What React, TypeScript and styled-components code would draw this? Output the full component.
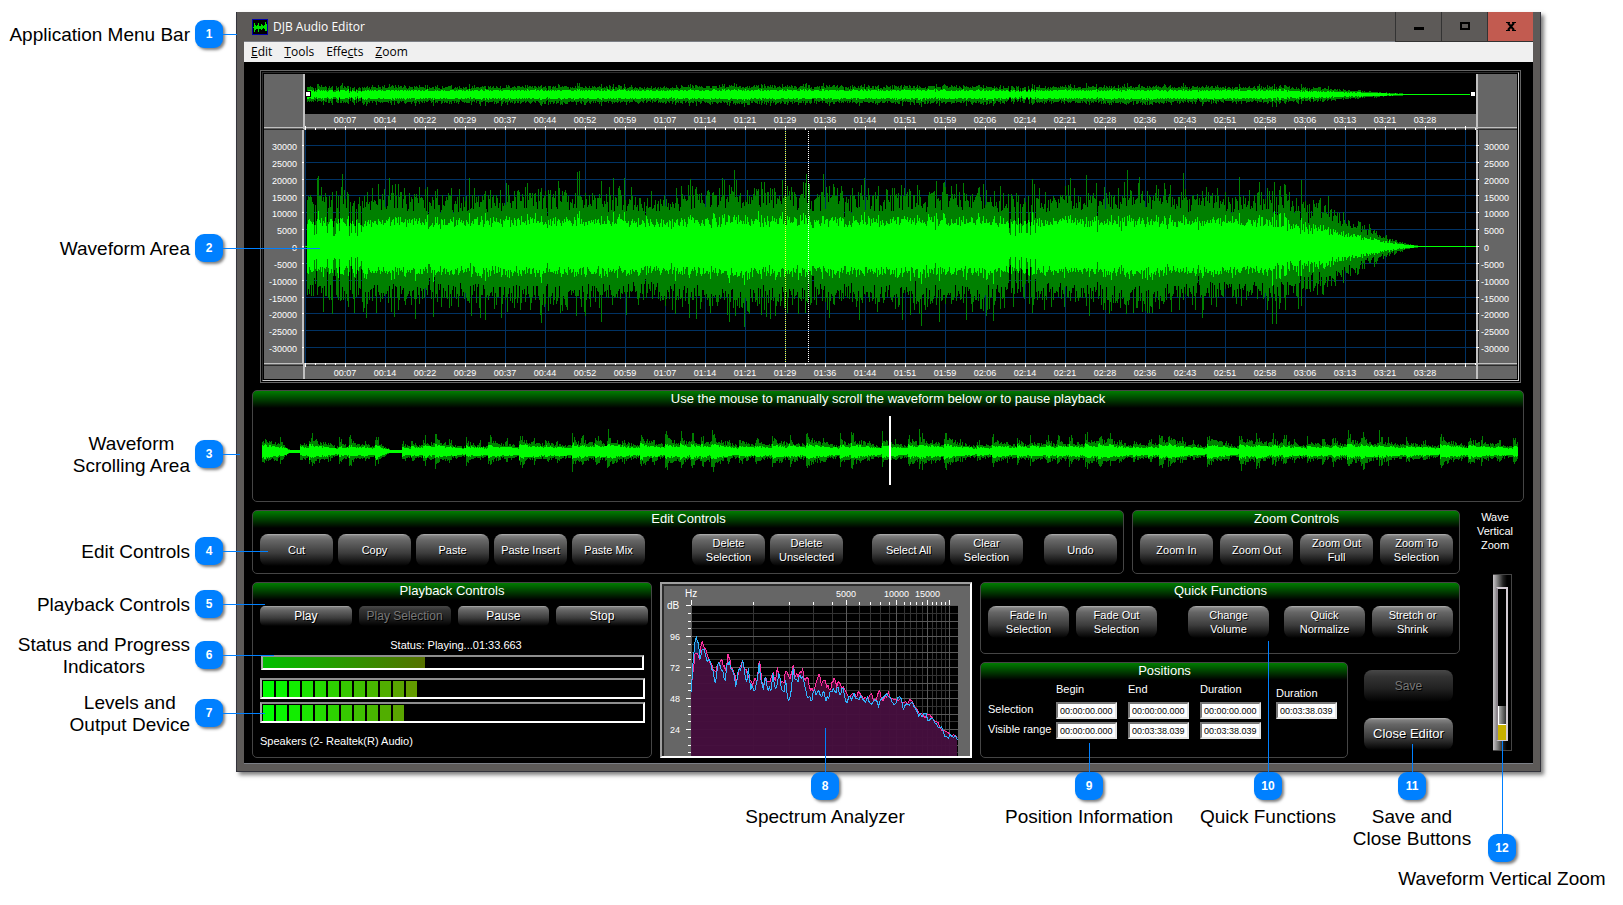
import React from "react";
import styled, { createGlobalStyle, css } from "styled-components";

const GlobalStyle = createGlobalStyle`
  * { box-sizing: border-box; }
  body { margin: 0; background: #fff; font-family: "Liberation Sans", Arial, sans-serif; color: #000; }
  button, input { font-family: inherit; }
`;

/* ---------- data ---------- */

const makeRandom = (seed: number) => () => {
  seed = (seed + 0x6d2b79f5) | 0;
  let t = Math.imul(seed ^ (seed >>> 15), 1 | seed);
  t = (t + Math.imul(t ^ (t >>> 7), 61 | t)) ^ t;
  return ((t ^ (t >>> 14)) >>> 0) / 4294967296;
};

type Sample = { up: number; down: number; innerUp: number; innerDown: number };

const TRACK_WIDTH = 1171;
const SCROLL_WIDTH = 1256;

const trackEnvelope = (x: number) => {
  if (x < 2) return 0;
  if (x > 1118) return 0;
  if (x > 1075) return 0.2 * Math.pow((1118 - x) / 43, 1.5);
  if (x > 965) return 0.2 + 0.8 * Math.pow((1075 - x) / 110, 0.9);
  return 1;
};

const trackSamples = (): Sample[] => {
  const random = makeRandom(11);
  const samples: Sample[] = [];
  for (let x = 0; x < TRACK_WIDTH; x++) {
    const env = trackEnvelope(x);
    const swell = 0.96 + 0.05 * Math.sin(x / 31) + (x > 400 && x < 560 ? 0.05 : 0);
    const sparse = x < 60 || (x > 694 && x < 742);
    const dip = random() < (sparse ? 0.2 : 0.02) ? (sparse ? 0.5 : 0.75) : 1;
    const burst = () => {
      const r = random();
      return 36 + random() * 20 + (r > 0.7 ? 9 : 0) + (r > 0.94 ? 12 : 0);
    };
    const fade = env < 1 ? 0.8 + random() * 0.5 : 1;
    const up = burst() * env * swell * dip * fade;
    const down = (burst() + 2) * env * swell * dip * fade;
    const peak = random() > 0.9 ? 4 : 0;
    samples.push({
      up,
      down,
      innerUp: (19 + random() * 8 + Math.max(0, up - 46) * 0.35 + peak) * env * dip * fade,
      innerDown: (19 + random() * 8 + Math.max(0, down - 48) * 0.35 + peak) * env * dip * fade,
    });
  }
  return samples;
};

const QUIET_SPANS = [[30, 37], [130, 139]];

const scrollSamples = (): Sample[] => {
  const random = makeRandom(29);
  const samples: Sample[] = [];
  let age = 0;
  let length = 18;
  let strength = 1;
  for (let x = 0; x < SCROLL_WIDTH; x++) {
    if (age >= length) {
      age = 0;
      length = 9 + Math.floor(random() * 10);
      strength = 0.55 + random() * 0.6;
    }
    const quiet = QUIET_SPANS.reduce(
      (level, [from, to]) => (x > to || x < from - 14 ? level : Math.max(0.06, (from - x) / 16)),
      1,
    );
    const level = quiet * strength * (0.4 + 0.6 * Math.exp(-age / (length * 0.9)));
    const spike = age < 4 && random() > 0.65 ? 6 : 0;
    const body = 11 * level;
    const up = body * (0.75 + random() * 0.6) + spike * level;
    const down = body * (0.75 + random() * 0.6) + spike * 0.7 * level;
    samples.push({ up, down, innerUp: body * (0.4 + random() * 0.25) + 0.5, innerDown: body * (0.4 + random() * 0.25) + 0.5 });
    age++;
  }
  return samples;
};

const columns = (samples: Sample[], middle: number, scale: number, inner: boolean) =>
  samples
    .map((s, x) => {
      const top = Math.round(middle - (inner ? s.innerUp : s.up) * scale);
      const bottom = Math.round(middle + 1 + (inner ? s.innerDown : s.down) * scale);
      return `M${x} ${top}h1V${bottom}h-1z`;
    })
    .join("");

const TRACK = trackSamples();
const SCROLL = scrollSamples();

const TIMES = [
  "00:07", "00:14", "00:22", "00:29", "00:37", "00:44", "00:52", "00:59", "01:07", "01:14",
  "01:21", "01:29", "01:36", "01:44", "01:51", "01:59", "02:06", "02:14", "02:21", "02:28",
  "02:36", "02:43", "02:51", "02:58", "03:06", "03:13", "03:21", "03:28",
];

const AMPLITUDES = [30000, 25000, 20000, 15000, 10000, 5000, 0, -5000, -10000, -15000, -20000, -25000, -30000];
const GRID_Y = [15, 32, 49, 65, 82, 99, 116, 133, 150, 167, 183, 200, 217];

/* ---------- page ---------- */

const Page = styled.main`
  display: grid;
  grid-template-columns: 236px minmax(0, 1fr) 82px;
  padding-top: 12px;
`;

const Margin = styled.div`
  display: flex;
  flex-direction: column;
  position: relative;
  z-index: 2;
`;

const SideCallout = styled.div<{ $before: number }>`
  display: flex;
  align-items: center;
  justify-content: flex-end;
  gap: 5px;
  height: 44px;
  margin-top: ${(p) => p.$before}px;
  padding-right: 13px;
`;

const CalloutLabel = styled.span`
  padding-top: 2px;
  font-size: 19px;
  line-height: 22px;
  text-align: center;
  white-space: pre;
`;

const Badge = styled.span`
  position: relative;
  flex: none;
  width: 28px;
  height: 28px;
  border-radius: 9px;
  background: #0080ff;
  color: #fff;
  font-size: 12px;
  font-weight: bold;
  line-height: 28px;
  text-align: center;
  box-shadow: 2px 2px 3px rgba(0, 0, 0, 0.5);
`;

const Leader = styled.i<{ $length: number; $up?: boolean }>`
  position: absolute;
  background: #0080ff;
  ${(p) =>
    p.$up
      ? css`
          left: 14px;
          bottom: 100%;
          width: 1px;
          height: ${p.$length}px;
        `
      : css`
          left: 100%;
          top: 14px;
          height: 1px;
          width: ${p.$length}px;
        `}
`;

const BottomCallouts = styled.div`
  grid-column: 1 / -1;
  display: grid;
  grid-template-columns:
    236px minmax(0, 480fr) minmax(0, 218fr) minmax(0, 65fr) minmax(0, 180fr) minmax(0, 178fr)
    minmax(0, 110fr) minmax(0, 70fr) 86px;
  position: relative;
  z-index: 2;
`;

const BottomCallout = styled.div<{ $column: number; $lower?: boolean }>`
  grid-column: ${(p) => p.$column};
  grid-row: 1;
  display: flex;
  flex-direction: column;
  align-items: center;
  gap: 4px;
  padding-top: ${(p) => (p.$lower ? 62 : 0)}px;
`;

/* ---------- window ---------- */

const Window = styled.section`
  background: #5d5a58;
  border: solid #33333b;
  border-width: 0 1px 1px;
  padding: 0 7px 7px;
  box-shadow: 3px 3px 4px rgba(0, 0, 0, 0.5);
`;

const TitleBar = styled.header`
  display: flex;
  align-items: center;
  height: 30px;
  padding-left: 8px;
  border-bottom: 1px solid #7c7f86;
`;

const WindowTitle = styled.h1`
  flex: 1;
  margin: 0 0 0 5px;
  font: 12px/16px "Open Sans", "Noto Sans", sans-serif;
  color: #fff;
`;

const WindowButton = styled.button<{ $close?: boolean }>`
  display: grid;
  place-items: center;
  width: 46px;
  height: 30px;
  padding: 0;
  border: solid #333;
  border-width: 0 0 1px 1px;
  background: ${(p) => (p.$close ? "#c25b50" : "transparent")};
`;

const MenuBar = styled.nav`
  display: flex;
  gap: 12px;
  height: 20px;
  padding-left: 7px;
  background: #f0f0f0;
`;

const MenuItem = styled.button`
  padding: 0;
  border: 0;
  background: none;
  color: #000;
  font: 12px/18px "Open Sans", "Noto Sans", sans-serif;
`;

const Client = styled.div`
  padding: 8px 9px 5px 8px;
  background: #000;
  color: #fff;
  border-bottom: 1px solid #7c7f86;
`;

/* ---------- waveform ---------- */

const WaveFrame = styled.div`
  margin: 0 3px 7px 8px;
  border: 1px solid #666;
  padding: 1px;
`;

const WaveBevel = styled.div`
  display: grid;
  grid-template-columns: 41px minmax(0, 1fr) 41px;
  border: 1px solid;
  border-color: #2b2b2b #c8c8c8 #c8c8c8 #2b2b2b;
  padding: 1px;
`;

const CornerCell = styled.div<{ $right?: boolean; $bottom?: boolean }>`
  background: #666;
  height: ${(p) => (p.$bottom ? 16 : 56)}px;
  border: solid;
  border-color: #c0c0c0 #c0c0c0 #2b2b2b;
  border-width: ${(p) => (p.$bottom ? "1px" : "0")} ${(p) => (p.$right ? 0 : 2)}px ${(p) => (p.$bottom ? 0 : 1)}px
    ${(p) => (p.$right ? 2 : 0)}px;
  box-shadow: ${(p) => (p.$bottom ? "inset 0 1px #666, inset 0 2px #2b2b2b" : "inset 0 -1px #666, inset 0 -2px #c0c0c0")};
`;

const Axis = styled.div<{ $right?: boolean }>`
  display: flex;
  flex-direction: ${(p) => (p.$right ? "row-reverse" : "row")};
  height: 233px;
  background: #666;
  color: #fff;
  font-size: 9px;
`;

const AxisLabels = styled.div<{ $right?: boolean }>`
  flex: 1;
  display: flex;
  flex-direction: column;
  padding: 9px ${(p) => (p.$right ? 0 : 5)}px 5px 0;
  text-align: ${(p) => (p.$right ? "left" : "right")};
`;

const AxisLabel = styled.span<{ $indent: number }>`
  flex: 1;
  display: block;
  line-height: 16px;
  padding-left: ${(p) => p.$indent}px;
`;

const AxisTicks = styled.svg`
  flex: none;
  width: 3px;
  height: 233px;
`;

const Overview = styled.svg`
  display: block;
  width: 100%;
  height: 40px;
  background: #000;
`;

const Plot = styled.svg`
  display: block;
  width: 100%;
  height: 233px;
  background: #000;
`;

const Ruler = styled.div<{ $bottom?: boolean }>`
  display: flex;
  flex-direction: ${(p) => (p.$bottom ? "column-reverse" : "column")};
  height: 16px;
  background: #666;
`;

const RulerLabels = styled.div`
  display: flex;
  height: 12px;
  padding: 0 31px 0 20px;
  font-size: 9px;
  line-height: 12px;
  color: #fff;
`;

const RulerLabel = styled.span`
  flex: 1 1 0;
  text-align: center;
`;

const RulerTicks = styled.svg`
  display: block;
  width: 100%;
  height: 4px;
`;

/* ---------- panels ---------- */

const Panel = styled.section`
  min-width: 0;
  border: 1px solid #454545;
  border-radius: 5px;
  background: linear-gradient(#007d00, #000 17px);
  padding: 0 6px 7px 7px;
`;

const PanelTitle = styled.h2`
  margin: 0 0 8px;
  font-size: 13px;
  font-weight: normal;
  line-height: 15px;
  text-align: center;
  color: #fff;
`;

const ScrollPanel = styled(Panel)`
  height: 112px;
  margin-bottom: 8px;
  padding: 0 5px 0 9px;
  & > h2 { margin-right: 4px; }
`;

const ScrollWave = styled.svg`
  display: block;
  width: 100%;
  height: 69px;
  margin-top: 10px;
`;

const Lower = styled.div`
  display: grid;
  grid-template-columns: minmax(0, 1fr) 64px;
`;

const Stack = styled.div`
  display: flex;
  flex-direction: column;
  gap: 8px;
  min-width: 0;
`;

const TopControls = styled.div`
  display: grid;
  grid-template-columns: minmax(0, 872fr) minmax(0, 328fr);
  gap: 8px;
  height: 64px;
`;

const BottomControls = styled.div`
  display: grid;
  grid-template-columns: minmax(0, 400fr) minmax(0, 312fr) minmax(0, 480fr);
  gap: 8px;
  height: 176px;
`;

const ButtonRow = styled.div<{ $gap: number }>`
  display: flex;
  gap: ${(p) => p.$gap}px;
`;

const ButtonGap = styled.span<{ $grow: number }>`
  flex: ${(p) => p.$grow} 1 0;
`;

const GlossButton = styled.button<{ $grow?: number; $height?: number; $size?: number }>`
  flex: ${(p) => (p.$grow ? `${p.$grow} 1 0` : "none")};
  min-width: 0;
  height: ${(p) => p.$height ?? 32}px;
  padding: 0;
  border: 0;
  border-radius: ${(p) => (p.$height ? 5 : 8)}px;
  background: linear-gradient(#b4b4b4 0, #808080 6%, #666 20%, #3c3c3c 60%, #000 100%);
  color: #fff;
  font-size: ${(p) => p.$size ?? 11}px;
  line-height: 14px;
  text-shadow: 1px 1px #000;
  white-space: pre;
  &:disabled {
    background: linear-gradient(#484848 0, #343434 20%, #202020 60%, #000 100%);
    color: #777;
  }
`;

const Playback = styled(Panel)`
  padding-right: 3px;
  & > h2 { margin-right: 4px; }
`;

const Status = styled.label`
  display: block;
  margin: 12px 0 3px;
  padding-left: 4px;
  font-size: 11px;
  line-height: 14px;
  text-align: center;
`;

const bevel = css`
  border: 2px solid;
  border-color: #8e8e8e #fff #fff #a8a8a8;
  background: #000;
`;

const StatusBar = styled.progress`
  ${bevel}
  appearance: none;
  display: block;
  width: calc(100% - 5px);
  height: 15px;
  margin: 0 4px 8px 1px;
  &::-webkit-progress-bar { background: #000; }
  &::-webkit-progress-value { background: linear-gradient(90deg, #00c000, #577100); }
`;

const LevelMeter = styled.div`
  ${bevel}
  display: flex;
  gap: 2px;
  height: 21px;
  margin: 0 3px 3px 0;
  padding: 1px 1px 0;
`;

const Segment = styled.i<{ $step: number }>`
  width: 11px;
  height: 16px;
  background: rgb(${(p) => p.$step * 9}, ${(p) => 255 - p.$step * 9}, 0);
`;

const Device = styled.p`
  margin: 11px 0 0;
  font-size: 11px;
  line-height: 14px;
`;

const SpectrumFrame = styled.figure`
  margin: 0;
  border: 2px solid;
  border-color: #a0a0a0 #fff #fff #a0a0a0;
  background: #666;
  overflow: hidden;
`;

const SpectrumChart = styled.svg`
  display: block;
  width: 100%;
  height: 100%;
  font-size: 10px;
`;

const QuickPanel = styled(Panel)`
  height: 72px;
`;

const PositionRow = styled.div`
  display: flex;
  gap: 16px;
  height: 96px;
  padding-right: 7px;
`;

const PositionPanel = styled(Panel)`
  flex: 1;
  & > h2 { margin-bottom: 4px; }
`;

const PositionGrid = styled.div`
  display: grid;
  grid-template-columns: 68px 72px 72px 76px 61px;
  grid-template-rows: 17px 17px 17px;
  row-gap: 3px;
  font-size: 11px;
  line-height: 14px;
`;

const PositionHead = styled.span<{ $low?: boolean }>`
  padding-top: ${(p) => (p.$low ? 4 : 0)}px;
`;

const PositionName = styled.span`
  white-space: nowrap;
`;

const TimeInput = styled.input`
  width: 61px;
  height: 17px;
  padding: 1px 0 0 2px;
  border: 2px solid;
  border-color: #777 #e6e6e6 #e6e6e6 #777;
  background: #fff;
  color: #000;
  font-size: 9px;
  line-height: 12px;
`;

const FileButtons = styled.div`
  display: flex;
  flex-direction: column;
  gap: 16px;
  width: 89px;
  padding-top: 8px;
`;

/* ---------- vertical zoom ---------- */

const ZoomColumn = styled.div`
  display: flex;
  flex-direction: column;
  padding-left: 6px;
`;

const ZoomLabel = styled.label`
  height: 64px;
  font-size: 11px;
  line-height: 14px;
  text-align: center;
  white-space: pre-line;
`;

const ZoomTrack = styled.div`
  align-self: flex-end;
  width: 19px;
  height: 177px;
  margin-right: 12px;
  padding: 12px 4px 10px 3px;
  border: solid #454545;
  border-width: 1px 1px 1px 0;
  background: linear-gradient(90deg, #c8c4c8, #777 5px, #222 10px, #000 14px);
`;

const ZoomRange = styled.input`
  appearance: none;
  writing-mode: vertical-lr;
  direction: rtl;
  display: block;
  width: 12px;
  height: 154px;
  margin: 0;
  border: 2px solid #d4ccd4;
  border-left-color: #8d868d;
  border-bottom-width: 1px;
  background: linear-gradient(to top, #c8b000 15px, #000 15px);
  &::-webkit-slider-thumb {
    appearance: none;
    width: 8px;
    height: 19px;
    border: solid #fff;
    border-width: 0 0 1px 1px;
    background: linear-gradient(90deg, #aaa, #333);
  }
`;

/* ---------- parts ---------- */

const TimeRuler = ({ bottom = false }: { bottom?: boolean }) => (
  <Ruler $bottom={bottom}>
    <RulerLabels>
      {TIMES.map((t) => (
        <RulerLabel key={t}>{t}</RulerLabel>
      ))}
    </RulerLabels>
    <RulerTicks viewBox={`0 0 ${TRACK_WIDTH} 4`} preserveAspectRatio="none" shapeRendering="crispEdges">
      <path d={`M0 ${bottom ? 0 : 1}h1171v1H0z`} fill="#c0c0c0" />
      <path d={`M0 ${bottom ? 2 : 3}h1171v1H0z`} fill="#2b2b2b" />
      <path
        d={Array.from({ length: 118 }, (_, i) =>
          i % 4 === 0 ? `M${i * 10} 0h1v4h-1z` : `M${i * 10} ${bottom ? 0 : 2}h1v2h-1z`,
        ).join("")}
        fill="#fff"
      />
    </RulerTicks>
  </Ruler>
);

const AmplitudeAxis = ({ right = false }: { right?: boolean }) => (
  <Axis $right={right}>
    <AxisLabels $right={right}>
      {AMPLITUDES.map((a) => (
        <AxisLabel key={a} $indent={right ? (a < 0 ? 2 : 5) : 0}>
          {a}
        </AxisLabel>
      ))}
    </AxisLabels>
    <AxisTicks viewBox="0 0 3 233" preserveAspectRatio="none" shapeRendering="crispEdges">
      <path d="M0 0h2v233H0z" fill="#c0c0c0" />
      <path d="M2 0h1v233H2z" fill="#2b2b2b" />
      <path d={GRID_Y.map((y) => `M0 ${y}h${right ? 3 : 2}v1H0z`).join("")} fill="#fff" />
    </AxisTicks>
  </Axis>
);

const WaveformArea = () => (
  <WaveFrame>
    <WaveBevel>
      <CornerCell />
      <div>
        <Overview viewBox="0 0 1171 40" preserveAspectRatio="none" shapeRendering="crispEdges">
          <path d={columns(TRACK, 20, 0.15, false)} fill="#008000" />
          <path d={columns(TRACK, 20, 0.15, true)} fill="#00ff00" />
          <path d="M0 17h6v6H0zM1165 17h6v6h-6z" fill="#000" />
          <path d="M1 18h4v4H1zM1166 18h4v4h-4z" fill="#fff" />
        </Overview>
        <TimeRuler />
      </div>
      <CornerCell $right />
      <AmplitudeAxis />
      <Plot viewBox="0 0 1171 233" preserveAspectRatio="none" shapeRendering="crispEdges">
        <path
          d={
            GRID_Y.map((y) => `M0 ${y}h1171v1H0z`).join("") +
            Array.from({ length: 30 }, (_, i) => `M${i * 40} 0h1v233h-1z`).join("")
          }
          fill="#003264"
        />
        <path d={columns(TRACK, 116, 1, false)} fill="#008000" />
        <path d={columns(TRACK, 116, 1, true)} fill="#00ff00" />
        <path d="M480.5 1V232" stroke="#ffff3c" strokeDasharray="1 1" />
        <path d="M503.5 1V232" stroke="#fff" strokeDasharray="1 1" />
      </Plot>
      <AmplitudeAxis right />
      <CornerCell $bottom />
      <TimeRuler bottom />
      <CornerCell $bottom $right />
    </WaveBevel>
  </WaveFrame>
);

const BLUE = [
  [154, 575], [158, 500], [164, 430], [169, 412], [175, 430], [180, 478], [186, 450], [192, 447], [198, 470], [205, 480],
  [212, 490], [220, 515], [226, 550], [232, 505], [238, 490], [244, 510], [250, 520], [256, 540], [262, 490], [268, 482],
  [274, 510], [280, 520], [287, 560], [294, 515], [302, 510], [308, 482], [314, 520], [319, 545], [325, 505], [332, 570],
  [338, 560], [346, 570], [352, 540], [358, 490], [364, 545], [370, 570], [376, 530], [382, 565], [388, 560], [393, 570],
  [398, 520], [404, 560], [411, 555], [416, 520], [424, 565], [432, 575], [437, 540], [442, 590], [449, 597], [455, 560],
  [460, 505], [466, 540], [474, 545], [480, 525], [488, 530], [494, 560], [500, 585], [508, 590], [512, 602], [520, 575],
  [528, 585], [537, 572], [545, 590], [552, 575], [558, 602], [566, 595], [574, 575], [580, 565], [588, 580], [594, 560],
  [602, 585], [610, 565], [618, 605], [626, 590], [634, 600], [642, 580], [652, 596], [662, 588], [672, 602], [682, 592],
  [694, 612], [704, 600], [716, 620], [724, 597], [734, 587], [745, 590], [756, 605], [768, 610], [780, 590], [790, 628],
  [800, 612], [816, 605], [826, 625], [836, 648], [846, 650], [858, 640], [868, 662], [878, 655], [890, 672], [900, 682],
  [910, 697], [920, 710], [930, 702], [940, 712], [952, 720],
];

const PINK = [
  [154, 560], [160, 510], [165, 462], [172, 460], [178, 475], [182, 440], [187, 425], [194, 445], [202, 465], [210, 490],
  [220, 510], [228, 515], [236, 490], [244, 478], [250, 500], [256, 510], [264, 462], [268, 472], [274, 510], [282, 520],
  [288, 548], [295, 520], [300, 500], [308, 480], [314, 512], [322, 522], [330, 540], [338, 555], [345, 535], [350, 550],
  [358, 482], [364, 530], [370, 560], [378, 535], [386, 545], [394, 530], [400, 520], [406, 540], [412, 502], [418, 530],
  [424, 547], [432, 550], [438, 512], [446, 530], [454, 520], [460, 495], [466, 530], [474, 530], [480, 515], [488, 507],
  [496, 540], [504, 535], [512, 570], [520, 575], [528, 550], [537, 522], [544, 555], [552, 540], [560, 560], [568, 570],
  [576, 545], [582, 535], [590, 560], [600, 550], [610, 560], [618, 575], [630, 590], [640, 580], [650, 590], [660, 580],
  [670, 598], [680, 595], [690, 585], [700, 600], [710, 595], [718, 572], [724, 595], [734, 590], [745, 576], [756, 595],
  [770, 600], [782, 595], [792, 607], [802, 612], [816, 603], [828, 625], [838, 640], [848, 645], [862, 643], [874, 650],
  [888, 665], [900, 680], [910, 690], [920, 695], [930, 705], [940, 704], [952, 712],
];

const spectrumLine = (points: number[][], seed: number) => {
  const random = makeRandom(seed);
  const at = (x: number, y: number) => `${(x / 3 - 22).toFixed(1)} ${(y / 3 - 84).toFixed(1)}`;
  return points
    .map(([x, y], i) => {
      if (i === 0) return `M${at(x, y)}`;
      const [px, py] = points[i - 1];
      const jitter = x < 200 ? 6 : 22;
      return `L${at((px + x) / 2, (py + y) / 2 + (random() - 0.5) * jitter)}L${at(x, y)}`;
    })
    .join("");
};

const FREQ_X = [29, 91, 127, 151, 170, 184, 197, 208, 218, 227, 234, 242, 248, 254, 260, 265, 270, 274, 279, 283, 287];
const FREQ_MAJOR = [0, 5, 10, 15, 20];
const DB_Y = Array.from({ length: 20 }, (_, i) => Math.round(21 + i * 7.75));

const Spectrum = () => {
  const blue = spectrumLine(BLUE, 5);
  const pink = spectrumLine(PINK, 8);
  return (
    <SpectrumFrame>
      <SpectrumChart viewBox="0 0 308 172" preserveAspectRatio="none" shapeRendering="crispEdges" role="img" aria-label="Spectrum">
        <path d="M0 0H308V2H2V172H0z" fill="#2b2b2b" />
        <path d="M29 22H296V172H29z" fill="#000" />
        <path d={FREQ_X.map((x) => `M${x} 22h1v150h-1z`).join("") + DB_Y.map((y) => `M29 ${y}h267v1H29z`).join("")} fill="#333" />
        <path
          d={
            FREQ_MAJOR.map((i) => `M${FREQ_X[i]} 22h1v150h-1z`).join("") +
            DB_Y.filter((_, i) => i % 2 === 0).map((y) => `M29 ${y}h267v1H29z`).join("")
          }
          fill="#5a5a5a"
        />
        <path d={`${blue}V172H29z`} fill="#123a70" fillOpacity="0.75" />
        <path d={`${pink}V172H29z`} fill="#4c0a38" fillOpacity="0.87" />
        <path d={pink} fill="none" stroke="#ff30a0" />
        <path d={blue} fill="none" stroke="#30b4ff" />
        <path
          d={
            FREQ_X.map((x, i) => (FREQ_MAJOR.includes(i) ? `M${x} 16h1v5h-1z` : `M${x} 18h1v3h-1z`)).join("") +
            DB_Y.map((y, i) => (i % 4 === 0 ? `M24 ${y}h5v1h-5z` : `M26 ${y}h3v1h-3z`)).join("")
          }
          fill="#fff"
        />
        <g fill="#fff">
          <text x="23" y="13">Hz</text>
          <text x="174" y="13" fontSize="9">5000</text>
          <text x="222" y="13" fontSize="9">10000</text>
          <text x="253" y="13" fontSize="9">15000</text>
          <text x="5" y="25">dB</text>
          <text x="8" y="56" fontSize="9">96</text>
          <text x="8" y="87" fontSize="9">72</text>
          <text x="8" y="118" fontSize="9">48</text>
          <text x="8" y="149" fontSize="9">24</text>
        </g>
      </SpectrumChart>
    </SpectrumFrame>
  );
};

const Levels = ({ label, count }: { label: string; count: number }) => (
  <LevelMeter role="meter" aria-label={label} aria-valuemin={0} aria-valuemax={29} aria-valuenow={count}>
    {Array.from({ length: count }, (_, i) => (
      <Segment key={i} $step={i} />
    ))}
  </LevelMeter>
);

const Positions = () => (
  <PositionPanel>
    <PanelTitle>Positions</PanelTitle>
    <PositionGrid>
      <span />
      <PositionHead>Begin</PositionHead>
      <PositionHead>End</PositionHead>
      <PositionHead>Duration</PositionHead>
      <PositionHead $low>Duration</PositionHead>
      <PositionName>Selection</PositionName>
      <TimeInput aria-label="Selection begin" defaultValue="00:00:00.000" />
      <TimeInput aria-label="Selection end" defaultValue="00:00:00.000" />
      <TimeInput aria-label="Selection duration" defaultValue="00:00:00.000" />
      <TimeInput aria-label="Total duration" defaultValue="00:03:38.039" />
      <PositionName>Visible range</PositionName>
      <TimeInput aria-label="Visible range begin" defaultValue="00:00:00.000" />
      <TimeInput aria-label="Visible range end" defaultValue="00:03:38.039" />
      <TimeInput aria-label="Visible range duration" defaultValue="00:03:38.039" />
    </PositionGrid>
  </PositionPanel>
);

const SIDE = [
  { n: 1, text: "Application Menu Bar", before: 0, line: 14 },
  { n: 2, text: "Waveform Area", before: 170, line: 97 },
  { n: 3, text: "Waveform\nScrolling Area", before: 162, line: 17 },
  { n: 4, text: "Edit Controls", before: 53, line: 45 },
  { n: 5, text: "Playback Controls", before: 9, line: 42 },
  { n: 6, text: "Status and Progress\nIndicators", before: 7, line: 51 },
  { n: 7, text: "Levels and\nOutput Device", before: 14, line: 42 },
];

const BOTTOM = [
  { n: 8, text: "Spectrum Analyzer", column: 3, line: 44 },
  { n: 9, text: "Position Information", column: 5, line: 29 },
  { n: 10, text: "Quick Functions", column: 6, line: 131 },
  { n: 11, text: "Save and\nClose Buttons", column: 7, line: 28 },
  { n: 12, text: "Waveform Vertical Zoom", column: 8, line: 93, lower: true },
];

export default function App() {
  return (
    <>
      <GlobalStyle />
      <Page>
        <Margin>
          {SIDE.map((c) => (
            <SideCallout key={c.n} $before={c.before}>
              <CalloutLabel>{c.text}</CalloutLabel>
              <Badge>
                {c.n}
                <Leader $length={c.line} />
              </Badge>
            </SideCallout>
          ))}
        </Margin>

        <Window>
          <TitleBar>
            <svg width="16" height="16" viewBox="0 0 16 16" shapeRendering="crispEdges">
              <path d="M.5.5h15v15H.5z" fill="#000" stroke="#0000a8" />
              <path
                d="M1 8h14M2.5 4v9M3.5 6v5M4.5 7v3M5.5 6v4M6.5 4v9M7.5 7v3M8.5 7v3M9.5 5v6M10.5 6v4M11.5 7v2M12.5 6v4M13.5 3v9M14.5 5v7"
                stroke="#00e000"
              />
            </svg>
            <WindowTitle>DJB Audio Editor</WindowTitle>
            <WindowButton aria-label="Minimize">
              <svg width="12" height="12"><path d="M1 7h10v3H1z" /></svg>
            </WindowButton>
            <WindowButton aria-label="Maximize">
              <svg width="12" height="12"><path d="M2 3h8v6H2z" fill="none" stroke="#000" strokeWidth="2" /></svg>
            </WindowButton>
            <WindowButton $close aria-label="Close">
              <svg width="12" height="12">
                <path d="M3 3l6 7M9 3l-6 7" stroke="#000" strokeWidth="2" />
                <path d="M1 2h4v1H1zM7 2h4v1H7zM1 10h4v1H1zM7 10h4v1H7z" />
              </svg>
            </WindowButton>
          </TitleBar>
          <MenuBar>
            <MenuItem><u>E</u>dit</MenuItem>
            <MenuItem><u>T</u>ools</MenuItem>
            <MenuItem>Effe<u>c</u>ts</MenuItem>
            <MenuItem><u>Z</u>oom</MenuItem>
          </MenuBar>

          <Client>
            <WaveformArea />

            <ScrollPanel>
              <PanelTitle>Use the mouse to manually scroll the waveform below or to pause playback</PanelTitle>
              <ScrollWave viewBox="0 0 1256 69" preserveAspectRatio="none" shapeRendering="crispEdges">
                <path d={columns(SCROLL, 35, 1, false)} fill="#008000" />
                <path d={columns(SCROLL, 35, 1, true)} fill="#00ff00" />
                <path d="M627 0h2v69h-2z" fill="#fff" />
              </ScrollWave>
            </ScrollPanel>

            <Lower>
              <Stack>
                <TopControls>
                  <Panel>
                    <PanelTitle>Edit Controls</PanelTitle>
                    <ButtonRow $gap={5}>
                      <GlossButton $grow={73}>Cut</GlossButton>
                      <GlossButton $grow={73}>Copy</GlossButton>
                      <GlossButton $grow={73}>Paste</GlossButton>
                      <GlossButton $grow={73}>Paste Insert</GlossButton>
                      <GlossButton $grow={73}>Paste Mix</GlossButton>
                      <ButtonGap $grow={37} />
                      <GlossButton $grow={73}>{"Delete\nSelection"}</GlossButton>
                      <GlossButton $grow={73}>{"Delete\nUnselected"}</GlossButton>
                      <ButtonGap $grow={19} />
                      <GlossButton $grow={73}>Select All</GlossButton>
                      <GlossButton $grow={73}>{"Clear\nSelection"}</GlossButton>
                      <ButtonGap $grow={11} />
                      <GlossButton $grow={73}>Undo</GlossButton>
                    </ButtonRow>
                  </Panel>
                  <Panel>
                    <PanelTitle>Zoom Controls</PanelTitle>
                    <ButtonRow $gap={7}>
                      <GlossButton $grow={73}>Zoom In</GlossButton>
                      <GlossButton $grow={73}>Zoom Out</GlossButton>
                      <GlossButton $grow={73}>{"Zoom Out\nFull"}</GlossButton>
                      <GlossButton $grow={73}>{"Zoom To\nSelection"}</GlossButton>
                    </ButtonRow>
                  </Panel>
                </TopControls>

                <BottomControls>
                  <Playback>
                    <PanelTitle>Playback Controls</PanelTitle>
                    <ButtonRow $gap={7}>
                      <GlossButton $grow={92} $height={20} $size={12}>Play</GlossButton>
                      <GlossButton $grow={92} $height={20} $size={12} disabled>Play Selection</GlossButton>
                      <GlossButton $grow={92} $height={20} $size={12}>Pause</GlossButton>
                      <GlossButton $grow={92} $height={20} $size={12}>Stop</GlossButton>
                    </ButtonRow>
                    <Status htmlFor="playback">Status: Playing...01:33.663</Status>
                    <StatusBar id="playback" max={218} value={93} />
                    <Levels label="Left level" count={12} />
                    <Levels label="Right level" count={11} />
                    <Device>Speakers (2- Realtek(R) Audio)</Device>
                  </Playback>

                  <Spectrum />

                  <Stack>
                    <QuickPanel>
                      <PanelTitle>Quick Functions</PanelTitle>
                      <ButtonRow $gap={7}>
                        <GlossButton $grow={81}>{"Fade In\nSelection"}</GlossButton>
                        <GlossButton $grow={81}>{"Fade Out\nSelection"}</GlossButton>
                        <ButtonGap $grow={17} />
                        <GlossButton $grow={81}>{"Change\nVolume"}</GlossButton>
                        <ButtonGap $grow={1} />
                        <GlossButton $grow={81}>{"Quick\nNormalize"}</GlossButton>
                        <GlossButton $grow={81}>{"Stretch or\nShrink"}</GlossButton>
                      </ButtonRow>
                    </QuickPanel>
                    <PositionRow>
                      <Positions />
                      <FileButtons>
                        <GlossButton $size={12} disabled>Save</GlossButton>
                        <GlossButton $size={13}>Close Editor</GlossButton>
                      </FileButtons>
                    </PositionRow>
                  </Stack>
                </BottomControls>
              </Stack>

              <ZoomColumn>
                <ZoomLabel htmlFor="vertical-zoom">{"Wave\nVertical\nZoom"}</ZoomLabel>
                <ZoomTrack>
                  <ZoomRange id="vertical-zoom" type="range" min={0} max={100} defaultValue={11} />
                </ZoomTrack>
              </ZoomColumn>
            </Lower>
          </Client>
        </Window>

        <BottomCallouts>
          {BOTTOM.map((c) => (
            <BottomCallout key={c.n} $column={c.column} $lower={c.lower}>
              <Badge>
                {c.n}
                <Leader $up $length={c.line} />
              </Badge>
              <CalloutLabel>{c.text}</CalloutLabel>
            </BottomCallout>
          ))}
        </BottomCallouts>
      </Page>
    </>
  );
}
